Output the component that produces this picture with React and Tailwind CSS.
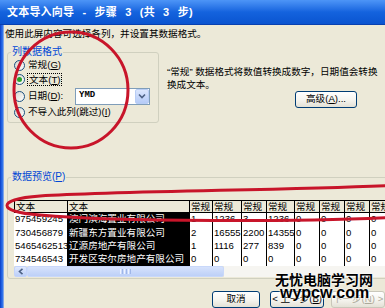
import React from "react";

const F = "font-['Liberation_Sans','Noto_Sans_CJK_SC',sans-serif]";

function Radio({ checked }) {
  return (
    <span className="w-[11px] h-[11px] rounded-full border border-[#1c5180] bg-linear-to-br from-[#d6d6ce] to-white flex items-center justify-center shrink-0">
      {checked && <span className="w-[5px] h-[5px] rounded-full bg-[#2aa32a]" />}
    </span>
  );
}

function XPButton({ children, className = "", disabled = false }) {
  return (
    <div
      className={
        "h-[17px] rounded-[3px] border flex items-center justify-center bg-linear-to-b from-white via-[#f6f5f0] to-[#e3e1d6] " +
        (disabled ? "border-[#c9c7ba] text-[#aca899] " : "border-[#003c74] text-black ") +
        className
      }
    >
      {children}
    </div>
  );
}

const colW = [
  "w-[53px]",
  "w-[122px]",
  "w-[23px]",
  "w-[29px]",
  "w-[25px]",
  "w-[28px]",
  "w-[25px]",
  "w-[25px]",
  "w-[25px]",
  "w-[25px]",
];
const header = ["文本", "文本", "常规", "常规", "常规", "常规", "常规", "常规", "常规", "常规"];
const rows = [
  ["975459245", "澳门滨海置业有限公司", "1", "1236", "3", "1236", "0", "0", "0", "0"],
  ["730456879", "新疆东方置业有限公司", "2", "16555", "2200", "14355", "0", "0", "0", "0"],
  ["5465462513", "辽源房地产有限公司", "1", "1116", "277", "839", "0", "0", "0", "0"],
  ["734546543", "开发区安尔房地产有限公司", "0", "0", "0", "0", "0", "0", "0", "0"],
];
const rowH = ["h-[13px]", "h-[14px]", "h-[13px]", "h-[13px]"];

export default function App() {
  return (
    <div className={"relative w-[385px] h-[308px] overflow-hidden bg-[#ece9d8] text-[9.6px] text-black " + F}>
      {/* title bar */}
      <div className="h-[25px] flex items-center pl-[7px] bg-linear-to-b from-[#4d95f7] via-[#1463de] to-[#0a54d0] border-b border-[#0840b0]">
        <span className="text-white font-bold text-[11px] whitespace-pre tracking-[0.2px] [word-spacing:5px]">
          文本导入向导 - 步骤 3 (共 3 步)
        </span>
      </div>

      <div className="flex h-[283px]">
        {/* left window frame */}
        <div className="w-[4px] bg-linear-to-r from-[#0b3cc4] via-[#1f5fe0] to-[#3a7bec] border-r border-[#7fa4e8]" />

        <div className="flex-1 pl-[1px] flex flex-col min-w-0">
          <div className="mt-[3px] leading-[12px] whitespace-nowrap">使用此屏内容可选择各列，并设置其数据格式。</div>

          {/* top section */}
          <div className="flex mt-[6px]">
            <fieldset className="ml-[2px] w-[152px] shrink-0 border border-[#d0d0bf] rounded-[3px] pb-[2px]">
              <legend className="ml-[3px] px-[1px] text-[#0046d5] leading-[12px] text-[10px]">列数据格式</legend>
              <div className="flex items-center h-[14px] pl-[6px] gap-[3px]">
                <Radio />
                <span>
                  常规(<u>G</u>)
                </span>
              </div>
              <div className="flex items-center h-[15px] pl-[6px] gap-[2px]">
                <Radio checked />
                <span className="border border-dotted border-black px-[1px] leading-[11px]">
                  文本(<u>T</u>)
                </span>
              </div>
              <div className="flex items-center h-[18px] pl-[6px] gap-[3px]">
                <Radio />
                <span className="w-[44px]">
                  日期(<u>D</u>):
                </span>
                <div className="w-[75px] h-[17px] border border-[#7f9db9] bg-white flex items-center">
                  <span className="flex-1 pl-[3px] font-bold text-[9px] font-['Liberation_Mono',monospace]">YMD</span>
                  <div className="w-[14px] h-[15px] rounded-[2px] bg-linear-to-b from-[#dbe6fd] to-[#b5cbf7] border border-[#b8cdf5] flex items-center justify-center">
                    <svg width="8" height="6" viewBox="0 0 8 6">
                      <path d="M1 1.5 L4 4.5 L7 1.5" fill="none" stroke="#4d6185" strokeWidth="1.6" />
                    </svg>
                  </div>
                </div>
              </div>
              <div className="flex items-center h-[15px] pl-[6px] gap-[3px]">
                <Radio />
                <span className="whitespace-nowrap">
                  不导入此列(跳过)(<u>I</u>)
                </span>
              </div>
            </fieldset>

            <div className="flex-1 min-w-0 pl-[8px] pt-[19px]">
              <div className="leading-[13px] whitespace-nowrap">“常规” 数据格式将数值转换成数字，日期值会转换</div>
              <div className="leading-[13px] whitespace-nowrap">换成文本。</div>
              <XPButton className="ml-[128px] w-[62px] h-[16px]">
                高级(<u>A</u>)...
              </XPButton>
            </div>
          </div>

          {/* data preview */}
          <fieldset className="mt-[48px] ml-[2px] w-[420px] border border-[#d0d0bf] rounded-[3px] pb-[1px]">
            <legend className="ml-[3px] px-[1px] text-[#0046d5] leading-[12px] text-[10px]">
              数据预览(<u>P</u>)
            </legend>
            <div className="ml-[6px] mt-[17px]">
              <div className="flex h-[13px] border-t border-b border-l border-black bg-[#ece9d8] leading-[11px]">
                {header.map((h, i) => (
                  <div key={i} className={colW[i] + " shrink-0 border-r border-black pl-[1px] " + (i === 0 ? "w-[52px]" : i === 9 ? "w-[24px]" : "")}>
                    {h}
                  </div>
                ))}
              </div>
              {rows.map((r, ri) => (
                <div key={ri} className={"flex " + rowH[ri]}>
                  {r.map((c, ci) => (
                    <div
                      key={ci}
                      className={
                        colW[ci] +
                        " shrink-0 flex items-center overflow-hidden whitespace-nowrap " +
                        (ci === 1
                          ? "bg-black text-white pl-[2px]"
                          : ci === 0
                          ? "bg-white pl-[1px]"
                          : "bg-white border-l border-black pl-[1px]")
                      }
                    >
                      {c}
                    </div>
                  ))}
                </div>
              ))}
              {/* horizontal scroll bar */}
              <div className="flex h-[11px]">
                <div className="w-[13px] rounded-[2px] bg-linear-to-b from-[#e0e9fd] to-[#bccff8] border border-[#c3d3fb] flex items-center justify-center">
                  <svg width="6" height="7" viewBox="0 0 6 7">
                    <path d="M4.5 0.8 L1.5 3.5 L4.5 6.2" fill="none" stroke="#4d6185" strokeWidth="1.6" />
                  </svg>
                </div>
                <div className="w-[197px] rounded-[2px] bg-linear-to-b from-[#d6e2fc] to-[#bdd0f8] border border-[#c9d8fa] flex items-center justify-center gap-[1px]">
                  <span className="w-[1px] h-[5px] bg-[#eef3ff]" />
                  <span className="w-[1px] h-[5px] bg-[#9fb6e8]" />
                  <span className="w-[1px] h-[5px] bg-[#eef3ff]" />
                  <span className="w-[1px] h-[5px] bg-[#9fb6e8]" />
                  <span className="w-[1px] h-[5px] bg-[#eef3ff]" />
                  <span className="w-[1px] h-[5px] bg-[#9fb6e8]" />
                </div>
                <div className="w-[170px] bg-[#f6f5f1]" />
              </div>
            </div>
          </fieldset>

          {/* bottom buttons */}
          <div className="flex mt-[12px] ml-[207px] gap-[10px]">
            <XPButton className="w-[58px]">取消</XPButton>
            <XPButton className="w-[65px]">
              &lt; 上一步(<u>B</u>)
            </XPButton>
            <XPButton disabled className="w-[65px] -ml-[3px]">
              下一步(<u>N</u>) &gt;
            </XPButton>
          </div>
        </div>
      </div>

      {/* watermark */}
      <div className="absolute left-[275px] top-[272px] flex flex-col items-start pointer-events-none [text-shadow:0_0_2px_white,0_0_2px_white]">
        <span className="text-[14px] font-bold leading-[15px] font-['Noto_Sans_CJK_SC',sans-serif]">无忧电脑学习网</span>
        <span className="text-[16px] font-bold leading-[12px] ml-[5px] font-['Liberation_Sans',sans-serif]">wypcw.com</span>
      </div>

      {/* red annotation ellipses */}
      <svg className="absolute inset-0 pointer-events-none" width="385" height="308" viewBox="0 0 385 308">
        <ellipse cx="71" cy="90" rx="57" ry="58" fill="none" stroke="#c8152a" strokeWidth="3" />
        <path
          d="M 400 185 C 300 190, 120 191, 40 196 C -4 199, -4 212, 40 215 C 120 222, 300 222, 400 217"
          fill="none"
          stroke="#c8152a"
          strokeWidth="3"
        />
      </svg>
    </div>
  );
}
